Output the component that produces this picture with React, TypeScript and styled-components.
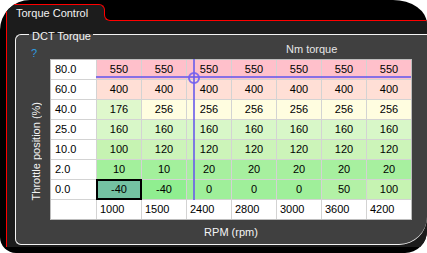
import styled, { createGlobalStyle } from "styled-components";

const GlobalStyle = createGlobalStyle`
  html, body {
    margin: 0;
    padding: 0;
    background: #fff;
  }
  body {
    font-family: "Liberation Sans", Arial, sans-serif;
    font-size: 11px;
  }
`;

const Window = styled.div`
  box-sizing: border-box;
  width: 427px;
  height: 253px;
  background: #000;
  border-radius: 30px 34px 22px 16px / 30px 24px 22px 16px;
  overflow: hidden;
  display: flex;
  flex-direction: column;
  padding: 4px 0 6px 6px;
`;

const TabStrip = styled.div`
  display: flex;
`;

const Tab = styled.div`
  box-sizing: border-box;
  width: 99px;
  height: 17px;
  margin-bottom: -1px;
  padding: 2px 0 0 9px;
  border: 1px solid #ff0000;
  border-bottom: none;
  border-radius: 6px 6px 0 0;
  background: #1c1c1c;
  color: #f2f2f2;
  line-height: 13px;
  position: relative;
  z-index: 1;

  /* concave joint between the tab edge and the page line */
  &::before {
    content: "";
    position: absolute;
    left: 100%;
    top: 9px;
    width: 7px;
    height: 7px;
    background: #1c1c1c;
  }
  &::after {
    content: "";
    position: absolute;
    left: 100%;
    top: 5px;
    width: 6px;
    height: 10px;
    border-left: 1px solid #ff0000;
    border-bottom: 1px solid #ff0000;
    border-bottom-left-radius: 6px;
    background: #000;
  }
`;

const TabPage = styled.div`
  flex: 1;
  display: flex;
  flex-direction: column;
  padding: 6px 0 2px 8px;
  border-top: 1px solid #ff0000;
  border-left: 1px solid #ff0000;
  background: #1c1c1c;
`;

const GroupBox = styled.fieldset`
  margin: 0;
  padding: 0;
  min-width: 0;
  border: 1px solid #f4f4f4;
  border-right: none;
  border-radius: 6px 0 28px 6px;
  background: #404040;
`;

const GroupTitle = styled.legend`
  margin-left: 13px;
  padding: 0 2px 0 3px;
  line-height: 14px;
  color: #f4f4f4;

  span {
    display: inline-block;
    transform: translateY(2px);
  }
`;

const Body = styled.div`
  display: grid;
  grid-template-columns: 34px 362px;
  grid-template-rows: 18px 161px 24px;
`;

const Help = styled.div`
  padding: 6px 0 0 15px;
  line-height: 13px;
  color: #2f9de0;
`;

const ValueTitle = styled.div`
  padding: 2px 0 0 236px;
  line-height: 13px;
  color: #e6e6e6;
`;

const YAxis = styled.div`
  grid-column: 1;
  grid-row: 2 / 4;
  display: flex;
  align-items: center;
  padding-left: 14px;
`;

const YAxisText = styled.span`
  writing-mode: vertical-rl;
  transform: rotate(180deg);
  line-height: 13px;
  white-space: nowrap;
  color: #f4f4f4;
`;

const XAxis = styled.div`
  grid-column: 2;
  grid-row: 3;
  padding-top: 6px;
  line-height: 13px;
  text-align: center;
  color: #f4f4f4;
`;

const TableWrap = styled.div`
  grid-column: 2;
  grid-row: 2;
  position: relative;
`;

const Table = styled.div`
  box-sizing: border-box;
  width: 362px;
  height: 161px;
  display: grid;
  grid-template-columns: 45px repeat(7, 44px);
  grid-template-rows: repeat(8, 19px);
  gap: 1px;
  border: 1px solid #bdbdbd;
  background: #d3d3d3;
`;

const Cell = styled.div<{ $bg?: string; $center?: boolean; $pad?: number; $selected?: boolean }>`
  display: flex;
  align-items: center;
  justify-content: ${(p) => (p.$center ? "center" : "flex-start")};
  padding-left: ${(p) => p.$pad ?? 0}px;
  line-height: 13px;
  color: #000;
  background: ${(p) => p.$bg ?? "#fff"};
  ${(p) =>
    p.$selected &&
    `
    outline: 2px solid #000;
    outline-offset: -1px;
    position: relative;
  `}
`;

const CursorV = styled.div`
  position: absolute;
  left: 143px;
  top: 0;
  width: 2px;
  height: 141px;
  background: rgba(105, 90, 235, 0.8);
`;

const CursorH = styled.div`
  position: absolute;
  left: 46px;
  right: 1px;
  top: 17px;
  height: 2px;
  background: rgba(105, 90, 235, 0.8);
`;

const CursorDot = styled.div`
  position: absolute;
  left: 138px;
  top: 13px;
  width: 12px;
  height: 12px;
  box-sizing: border-box;
  border: 2px solid rgba(115, 95, 240, 0.9);
  border-radius: 50%;
`;

const rows = [
  { label: "80.0", values: [550, 550, 550, 550, 550, 550, 550] },
  { label: "60.0", values: [400, 400, 400, 400, 400, 400, 400] },
  { label: "40.0", values: [176, 256, 256, 256, 256, 256, 256] },
  { label: "25.0", values: [160, 160, 160, 160, 160, 160, 160] },
  { label: "10.0", values: [100, 120, 120, 120, 120, 120, 120] },
  { label: "2.0", values: [10, 10, 20, 20, 20, 20, 20] },
  { label: "0.0", values: [-40, -40, 0, 0, 0, 50, 100] },
];

const rpm = [1000, 1500, 2400, 2800, 3000, 3600, 4200];

const stops: [number, number[]][] = [
  [-40, [144, 238, 144]],
  [100, [198, 243, 178]],
  [160, [216, 247, 200]],
  [256, [255, 253, 224]],
  [400, [255, 223, 214]],
  [550, [255, 192, 203]],
];

const cellColor = (v: number) => {
  for (let i = 0; i < stops.length - 1; i++) {
    const [a, ca] = stops[i];
    const [b, cb] = stops[i + 1];
    if (v <= b) {
      const t = Math.max(0, (v - a) / (b - a));
      const c = ca.map((x, k) => Math.round(x + (cb[k] - x) * t));
      return `rgb(${c.join(",")})`;
    }
  }
  return "rgb(255,192,203)";
};

export default function App() {
  return (
    <>
      <GlobalStyle />
      <Window>
        <TabStrip>
          <Tab>Torque Control</Tab>
        </TabStrip>
        <TabPage>
          <GroupBox>
            <GroupTitle>
              <span>DCT Torque</span>
            </GroupTitle>
            <Body>
              <Help>?</Help>
              <ValueTitle>Nm torque</ValueTitle>
              <YAxis>
                <YAxisText>Throttle position (%)</YAxisText>
              </YAxis>
              <TableWrap>
                <Table>
                  {rows.map((r, ri) => [
                    <Cell key={`l${ri}`} $pad={4}>
                      {r.label}
                    </Cell>,
                    ...r.values.map((v, ci) => {
                      const selected = ri === rows.length - 1 && ci === 0;
                      return (
                        <Cell
                          key={`c${ri}-${ci}`}
                          $center
                          $selected={selected}
                          $bg={selected ? "#74c1a2" : cellColor(v)}
                        >
                          {v}
                        </Cell>
                      );
                    }),
                  ])}
                  <Cell />
                  {rpm.map((r) => (
                    <Cell key={r} $pad={3}>
                      {r}
                    </Cell>
                  ))}
                </Table>
                <CursorV />
                <CursorH />
                <CursorDot />
              </TableWrap>
              <XAxis>RPM (rpm)</XAxis>
            </Body>
          </GroupBox>
        </TabPage>
      </Window>
    </>
  );
}
